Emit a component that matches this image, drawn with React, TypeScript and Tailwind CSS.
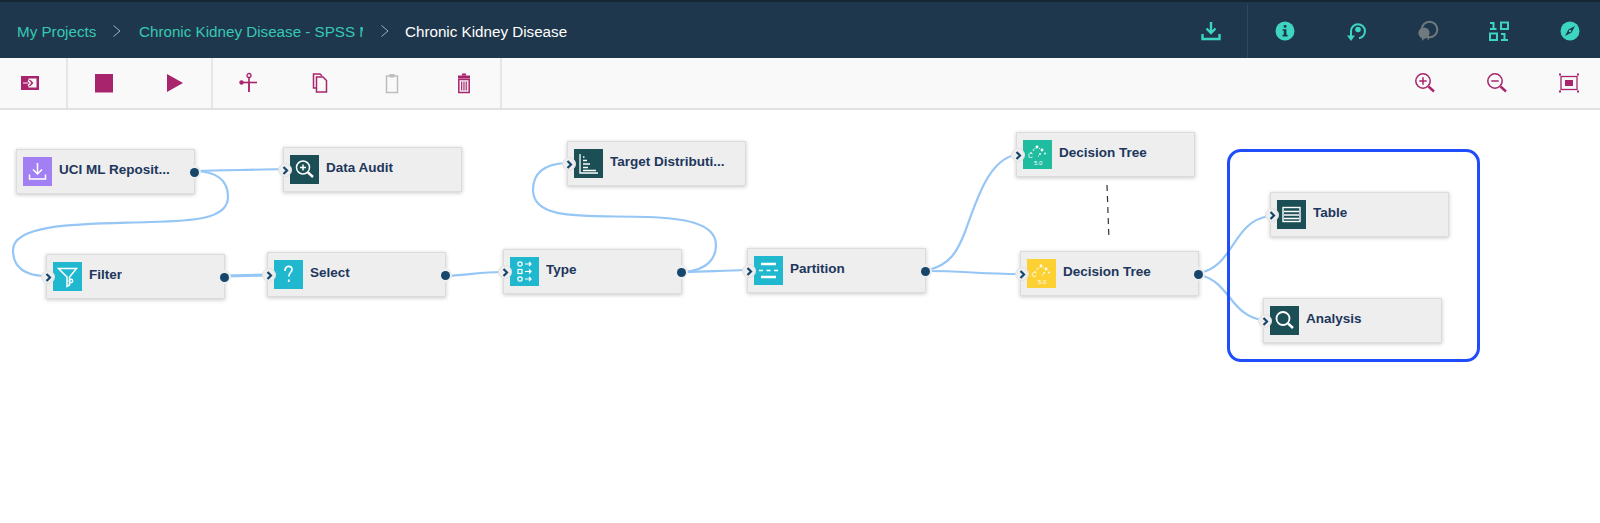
import type { ReactNode } from 'react';

const font = { fontFamily: '"Liberation Sans", Arial, sans-serif' };

const Chevron = () => (
  <svg width="10" height="14" viewBox="0 0 10 14" fill="none" stroke="#9fb0ba" strokeWidth="1">
    <path d="M1.5 1.5 8 7l-6.5 5.5" />
  </svg>
);

const HeadIcon = ({ children }: { children: ReactNode }) => (
  <svg width="22" height="22" viewBox="0 0 22 22" fill="none" className="shrink-0">
    {children}
  </svg>
);

const teal = '#3dd5bf';

const HeaderIcons = () => (
  <div className="ml-auto flex h-full items-center">
    <div className="mr-[25px]">
      <HeadIcon>
        <path d="M11 2v11M6.5 8.5 11 13l4.5-4.5" stroke={teal} strokeWidth="2.4" />
        <path d="M2.5 14v5h17v-5" stroke={teal} strokeWidth="2.4" />
      </HeadIcon>
    </div>
    <div className="flex h-full w-[353px] items-center justify-between border-l border-[#2a4a60] pl-[26px] pr-[19px]">
      <HeadIcon>
        <circle cx="11" cy="11" r="9.5" fill={teal} />
        <rect x="9.8" y="5" width="2.6" height="2.6" fill="#1f374c" />
        <path d="M8.6 9.2h3.8v5.6h1.2v1.6H8.5v-1.6h1.3v-4H8.6z" fill="#1f374c" />
      </HeadIcon>
      <HeadIcon>
        <path d="M6 11a7 7 0 1 1 8 7.2" stroke={teal} strokeWidth="2" />
        <circle cx="13" cy="9.5" r="2.8" fill={teal} />
        <path d="M6 21 2 15.5h8z" fill={teal} />
        <path d="M6 11v5" stroke={teal} strokeWidth="2" />
      </HeadIcon>
      <HeadIcon>
        <circle cx="12.5" cy="9.5" r="7.8" stroke="#6f7a7e" strokeWidth="2" />
        <circle cx="7" cy="13" r="5.6" fill="#6f7a7e" />
        <path d="M5 16v5l4-4zM10 17l1 3.5 2-3.5z" fill="#6f7a7e" />
      </HeadIcon>
      <HeadIcon>
        <path d="M2 3h3.5v6M2 9h6.5" stroke={teal} strokeWidth="2" />
        <rect x="13" y="2.5" width="7" height="6.5" stroke={teal} strokeWidth="2" />
        <rect x="2" y="13.5" width="7" height="6.5" stroke={teal} strokeWidth="2" />
        <path d="M13 14h3.5v6M13 20h7" stroke={teal} strokeWidth="2" />
      </HeadIcon>
      <HeadIcon>
        <circle cx="11" cy="11" r="9.5" fill={teal} />
        <path d="M16 6 12.6 12.6 6 16l3.4-6.6z" fill="#1f374c" />
        <circle cx="11" cy="11" r="1.2" fill={teal} />
      </HeadIcon>
    </div>
  </div>
);

const magenta = '#a8246c';

const ToolIcon = ({ children }: { children: ReactNode }) => (
  <svg width="22" height="22" viewBox="0 0 22 22" fill="none">
    {children}
  </svg>
);

const ToolBtn = ({ children }: { children: ReactNode }) => (
  <div className="flex h-full w-[72px] items-center justify-center">
    <ToolIcon>{children}</ToolIcon>
  </div>
);

const Toolbar = () => (
  <div className="flex h-[52px] items-stretch border-b-2 border-[#e2e2e2] bg-[#f9f9f9]">
    <div className="flex w-[68px] items-center justify-center border-r-2 border-[#e6e6e6] pr-[6px]">
      <ToolIcon>
        <rect x="2" y="4" width="18" height="14" fill={magenta} />
        <rect x="9.5" y="6.5" width="8" height="9" fill="#f9f9f9" />
        <path d="M7 11h6M10.5 8l3 3-3 3" stroke={magenta} strokeWidth="1.4" />
        <path d="M4 11h5M9 8.5l2.5 2.5L9 13.5" stroke="#f9f9f9" strokeWidth="1.2" />
      </ToolIcon>
    </div>
    <div className="flex w-[145px] items-center border-r-2 border-[#e6e6e6]">
      <ToolBtn>
        <rect x="2" y="2" width="18" height="18.5" fill={magenta} />
      </ToolBtn>
      <ToolBtn>
        <path d="M3 2 19 11 3 20z" fill={magenta} />
      </ToolBtn>
    </div>
    <div className="flex w-[289px] items-center border-r-2 border-[#e6e6e6]">
      <ToolBtn>
        <path d="M11 5v15" stroke={magenta} strokeWidth="1.6" />
        <path d="M11 10c0 3 0 6 0 10" stroke={magenta} strokeWidth="1.4" />
        <circle cx="11" cy="3.5" r="2" stroke={magenta} strokeWidth="1.3" />
        <path d="M5 10.5h14" stroke={magenta} strokeWidth="1.6" />
        <circle cx="3.5" cy="10.5" r="2.2" fill={magenta} />
      </ToolBtn>
      <ToolBtn>
        <path d="M6 16H3.5V2H10l2 2" stroke={magenta} strokeWidth="1.5" />
        <path d="M6.5 5H13l3.5 3.5V20h-10z" stroke={magenta} strokeWidth="1.5" />
      </ToolBtn>
      <ToolBtn>
        <rect x="5.5" y="4" width="11" height="16.5" stroke="#bdbdbd" strokeWidth="1.5" />
        <rect x="8.5" y="2" width="5" height="3.5" fill="#bdbdbd" />
      </ToolBtn>
      <ToolBtn>
        <path d="M5 3.5h12v3H5z" fill={magenta} />
        <rect x="9" y="1.5" width="4" height="2" fill={magenta} />
        <rect x="5.8" y="7.5" width="10.4" height="13" stroke={magenta} strokeWidth="1.5" />
        <path d="M8.5 9.5v9M10.2 9.5v9M11.9 9.5v9M13.6 9.5v9" stroke={magenta} strokeWidth="0.9" />
      </ToolBtn>
    </div>
    <div className="ml-auto flex items-center gap-[50px] pr-[20px]">
      <ToolIcon>
        <circle cx="9" cy="9" r="7.2" stroke={magenta} strokeWidth="1.5" />
        <path d="M9 5.3v7.4M5.3 9h7.4" stroke={magenta} strokeWidth="1.5" />
        <path d="m14.5 14.5 5.5 5" stroke={magenta} strokeWidth="2.4" />
      </ToolIcon>
      <ToolIcon>
        <circle cx="9" cy="9" r="7.2" stroke={magenta} strokeWidth="1.5" />
        <path d="M5.3 9h7.4" stroke={magenta} strokeWidth="1.5" />
        <path d="m14.5 14.5 5.5 5" stroke={magenta} strokeWidth="2.4" />
      </ToolIcon>
      <ToolIcon>
        <rect x="3" y="4.5" width="16" height="13" stroke={magenta} strokeWidth="1.3" />
        <rect x="7" y="8" width="8" height="6" fill={magenta} />
        <path d="M1 1.5h2v2H1zM19 1.5h2v2h-2zM1 18.5h2v2H1zM19 18.5h2v2h-2z" fill={magenta} />
      </ToolIcon>
    </div>
  </div>
);

type NodeDef = {
  label: string;
  x: number;
  y: number;
  color: string;
  icon: ReactNode;
  out?: boolean;
  noIn?: boolean;
};

const treeIcon = (
  <>
    <g fill="#fff" stroke="none">
      <circle cx="14" cy="7" r="1.4" />
      <circle cx="19" cy="10" r="1.4" />
      <circle cx="22" cy="13.5" r="0.9" />
      <circle cx="17" cy="14" r="0.9" />
      <circle cx="10.5" cy="10" r="0.8" />
      <circle cx="8" cy="12.5" r="0.7" />
      <circle cx="12" cy="8.5" r="0.5" />
      <circle cx="16.5" cy="8.5" r="0.5" />
      <circle cx="15.5" cy="16" r="0.6" />
    </g>
    <text x="5" y="18" fontSize="6.5" fill="#fff" stroke="none" style={font}>C</text>
    <text x="11" y="24.5" fontSize="6" fill="#fff" stroke="none" style={font}>5.0</text>
  </>
);

const nodes: NodeDef[] = [
  {
    label: 'UCI ML Reposit...',
    x: 16,
    y: 149,
    color: '#a280f3',
    noIn: true,
    out: true,
    icon: (
      <>
        <path d="M14.5 6v11M10 12.5l4.5 4.5 4.5-4.5" />
        <path d="M6.5 17.5v4.5h16v-4.5" />
      </>
    ),
  },
  {
    label: 'Data Audit',
    x: 283,
    y: 147,
    color: '#1b4f55',
    icon: (
      <>
        <circle cx="13" cy="12.5" r="6.5" />
        <path d="M13 9.5v6M10 12.5h6" />
        <path d="m18 17.5 5 4.5" strokeWidth="2.4" />
      </>
    ),
  },
  {
    label: 'Filter',
    x: 46,
    y: 254,
    color: '#1fb8cf',
    out: true,
    icon: (
      <>
        <path d="M5.5 6.5h18L16.5 15v8l-2.5 1.5V15z" />
        <circle cx="18" cy="19" r="1.7" />
      </>
    ),
  },
  {
    label: 'Select',
    x: 267,
    y: 252,
    color: '#1fb8cf',
    out: true,
    icon: (
      <>
        <path d="M11 11c0-6 7-6 7-1.5 0 3-3.2 3.2-3.2 7" strokeWidth="1.7" />
        <path d="M14.8 19.5v2.5" strokeWidth="1.8" />
      </>
    ),
  },
  {
    label: 'Type',
    x: 503,
    y: 249,
    color: '#1fb8cf',
    out: true,
    icon: (
      <g strokeWidth="1.2">
        <circle cx="10" cy="7" r="2.2" />
        <rect x="8" y="12.5" width="4" height="4" />
        <circle cx="10" cy="22" r="2.2" />
        <path d="M15 7h6M19 5l2 2-2 2M15 14.5h6M19 12.5l2 2-2 2M15 22h6M19 20l2 2-2 2" />
      </g>
    ),
  },
  {
    label: 'Target Distributi...',
    x: 567,
    y: 141,
    color: '#1b4f55',
    icon: (
      <g strokeWidth="1.3">
        <path d="M6 5v19h18" />
        <path d="M9 8h1.5M9 11.5h4M9 15h7M9 18.5h5M9 21.5h13" strokeWidth="1.6" />
      </g>
    ),
  },
  {
    label: 'Partition',
    x: 747,
    y: 248,
    color: '#1fb8cf',
    out: true,
    icon: (
      <>
        <path d="M7 8h15M7 21h15" strokeWidth="2.6" />
        <path d="M5 14.5h4M12.5 14.5h4M20 14.5h4" strokeWidth="1.6" />
      </>
    ),
  },
  { label: 'Decision Tree', x: 1016, y: 132, color: '#20bca0', icon: treeIcon },
  { label: 'Decision Tree', x: 1020, y: 251, color: '#fdd133', out: true, icon: treeIcon },
  {
    label: 'Table',
    x: 1270,
    y: 192,
    color: '#1b4f55',
    icon: (
      <>
        <rect x="6" y="7.5" width="17" height="14" strokeWidth="1.4" />
        <path d="M7 11.5h15M7 15h15M7 18.5h15" strokeWidth="1.6" />
      </>
    ),
  },
  {
    label: 'Analysis',
    x: 1263,
    y: 298,
    color: '#1b4f55',
    icon: (
      <>
        <circle cx="13" cy="12.5" r="6.5" strokeWidth="1.8" />
        <path d="m18 17.5 5 4.5" strokeWidth="2.4" />
      </>
    ),
  },
];

const FlowNode = ({ node }: { node: NodeDef }) => (
  <div
    className="absolute flex h-[45px] w-[179px] items-center border border-[#dcdcdc] bg-[#eeeeee] pl-[6px] shadow-[0_1px_4px_rgba(0,0,0,0.22)]"
    style={{ left: node.x, top: node.y - 110 }}
  >
    <svg
      width="29"
      height="29"
      viewBox="0 0 29 29"
      fill="none"
      stroke="#fff"
      strokeWidth="1.5"
      className="shrink-0"
      style={{ background: node.color }}
    >
      {node.icon}
    </svg>
    <span className="ml-[7px] -mt-[2px] truncate text-[13.5px] font-bold text-[#20365c]">{node.label}</span>
    {!node.noIn && (
      <div className="absolute -left-[6px] top-[15px] flex h-[14px] w-[14px] items-center justify-center rounded-full border border-[#e2e2e2] bg-[#eeeeee]">
        <svg width="7" height="9" viewBox="0 0 7 9" fill="none" stroke="#16466b" strokeWidth="2.2">
          <path d="m1.5 1 3.5 3.500L1.500 8" />
        </svg>
      </div>
    )}
    {node.out && (
      <div className="absolute -right-[7px] top-[15px] flex h-[14px] w-[14px] items-center justify-center rounded-full bg-[#eeeeee]">
        <div className="h-[9px] w-[9px] rounded-full bg-[#16466b]" />
      </div>
    )}
  </div>
);

const edges = [
  'M196 171 C225 170 255 170 283 169',
  'M196 171 C222 172 228 185 228 197 C228 220 190 221 150 222 C90 224 13 222 13 250 C13 265 22 275 44 276',
  'M447 276 C470 275 480 272 502 272',
  'M684 272 C708 270 716 258 716 245 C716 222 680 218 647 217 C590 215 533 222 533 190 C533 172 545 164 566 163',
  'M684 272 C710 271 725 271 746 270',
  'M927 271 C960 271 985 274 1019 274',
  'M927 270 C950 266 958 250 965 232 C978 195 990 160 1015 155',
  'M1200 273 C1235 265 1232 222 1269 216',
  'M1200 275 C1230 282 1230 315 1262 320',
];

const Canvas = () => (
  <div className="relative h-[413px] bg-white">
    <svg width="1600" height="413" viewBox="0 110 1600 413" fill="none" className="absolute left-0 top-0">
      {edges.map((d) => (
        <path key={d} d={d} stroke="#95c6f6" strokeWidth="2.2" />
      ))}
      <path d="M226 276 L266 275" stroke="#95c6f6" strokeWidth="3.2" />
      <path d="M1107 185 L1109 240" stroke="#333" strokeWidth="1.2" strokeDasharray="6 5" />
    </svg>
    {nodes.map((n) => (
      <FlowNode key={n.label + n.x} node={n} />
    ))}
    <div className="pointer-events-none absolute left-[1227px] top-[39px] h-[213px] w-[253px] rounded-[14px] border-[3px] border-[#1f4dfb]" />
  </div>
);

export default function App() {
  return (
    <div className="h-[523px] w-[1600px] overflow-hidden bg-white" style={font}>
      <header className="flex h-[58px] items-center border-t-2 border-[#152733] bg-[#1f374c] pl-[17px] pt-[2px]">
        <span className="mt-[2px] w-[80px] text-[15.2px] text-[#36c9b4]">My Projects</span>
        <div className="ml-[15px] mr-[17px]"><Chevron /></div>
        <span className="mt-[2px] w-[224px] overflow-hidden whitespace-nowrap text-[15.2px] text-[#36c9b4]">
          Chronic Kidney Disease - SPSS M
        </span>
        <div className="ml-[17px] mr-[15px]"><Chevron /></div>
        <span className="mt-[2px] text-[15.2px] text-white">Chronic Kidney Disease</span>
        <HeaderIcons />
      </header>
      <Toolbar />
      <Canvas />
    </div>
  );
}
